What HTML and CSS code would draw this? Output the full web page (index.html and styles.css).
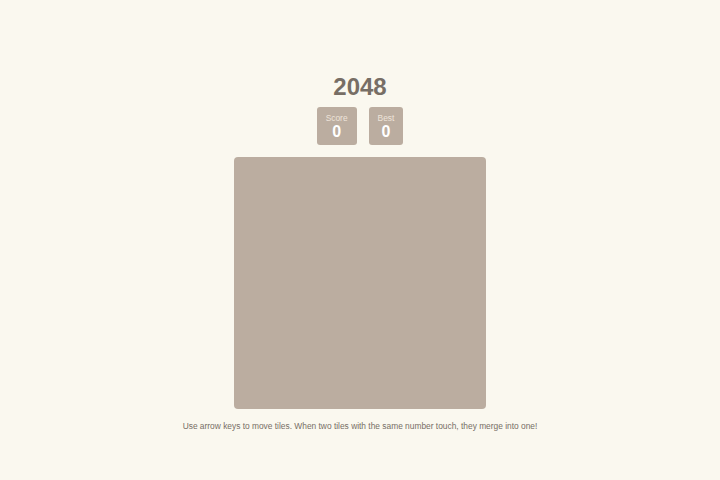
FILE: index.html
```html
<!DOCTYPE html>
<html>
<head>
<meta charset="utf-8">
<link rel="stylesheet" href="styles.css">
</head>
<body>
<main class="game">
  <h1 class="title">2048</h1>
  <div class="scores">
    <div class="score-box"><div class="label">Score</div><div class="value">0</div></div>
    <div class="score-box"><div class="label">Best</div><div class="value">0</div></div>
  </div>
  <div class="board"></div>
  <p class="hint">Use arrow keys to move tiles. When two tiles with the same number touch, they merge into one!</p>
</main>
</body>
</html>
```

FILE: styles.css
```css
html, body {
  margin: 0;
  padding: 0;
  background: #faf8ef;
  font-family: "Liberation Sans", Arial, sans-serif;
  color: #776e65;
}
.game {
  display: flex;
  flex-direction: column;
  align-items: center;
  padding-top: 73px;
}
.title {
  margin: 0;
  font-size: 24px;
  line-height: 28px;
  font-weight: bold;
}
.scores {
  display: flex;
  gap: 12px;
  margin-top: 6px;
}
.score-box {
  background: #bbada0;
  border-radius: 3px;
  padding: 6px 9px 4px;
  display: flex;
  flex-direction: column;
  align-items: center;
}
.label {
  font-size: 8.4px;
  line-height: 10px;
  color: #eee4da;
}
.value {
  font-size: 16px;
  line-height: 18px;
  font-weight: bold;
  color: #ffffff;
}
.board {
  margin-top: 12px;
  width: 252px;
  height: 252px;
  background: #bbada0;
  border-radius: 4px;
}
.hint {
  margin: 11px 0 0;
  font-size: 8.4px;
  line-height: 12px;
  color: #776e65;
}
```
